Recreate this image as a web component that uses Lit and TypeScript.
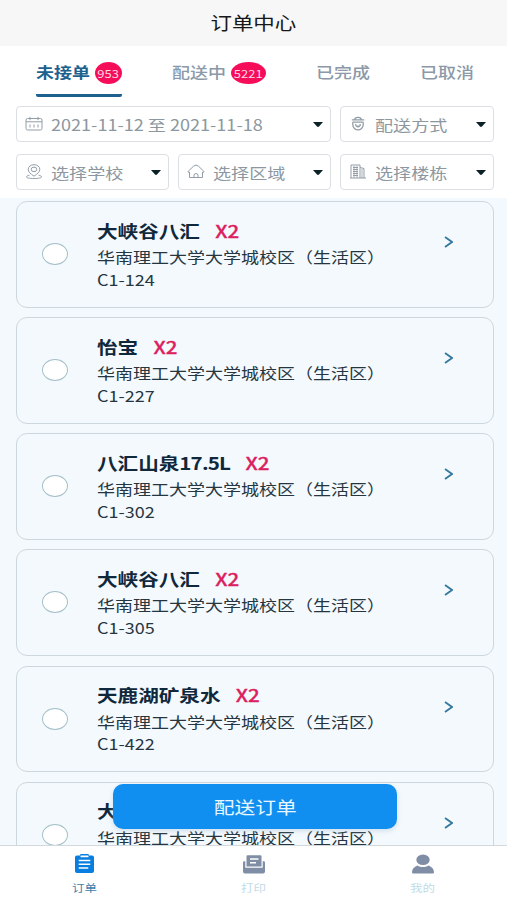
import { LitElement, html, css, svg } from 'lit';
import { customElement, property } from 'lit/decorators.js';

const filterIcons: Record<string, unknown> = {
  date: svg`<rect x="1" y="2.500" width="16" height="11.500" rx="1.500"/><path d="M1 5.800h16M5 .8v3.400M13 .8v3.400M5 8.500v3M9 8.500v3M13 8.500v3" />`,
  way: svg`<path stroke-width="1.300" d="M2.800 3.800h12.400M5.500 3.800C6 .5 12 .5 12.500 3.800M3.600 6.200h10.800M3.800 6.200v2.600c0 3 2.700 5 5.200 5s5.200-2 5.200-5V6.200M6.800 8c-.6 3.800 5 3.800 4.400 0M9 9.200v1"/>`,
  school: svg`<path d="M9 12.200C5.500 9.800 3.200 7.900 3.200 5.300 3.200 2.700 5.700.7 9 .7s5.800 2 5.800 4.600c0 2.600-2.300 4.500-5.800 6.900zM4.500 11.200c-2 .4-3 1-3 1.700 0 .9 2.500 1.600 7.500 1.600s7.500-.7 7.500-1.600c0-.7-1-1.300-3-1.700"/><ellipse cx="9" cy="5.400" rx="2.800" ry="2.300"/>`,
  area: svg`<path d="M2.500 8v5.500h13V8M2.500 8.200H1.200Q.8 7.700 1.300 7.200L6.500 2.200Q9 0 11.500 2.200l5.200 5q.5.500.1 1h-1.300M7 13.500v-3q2-2.200 4 0v3"/>`,
  building: svg`<path d="M2 14V1h9v13M11 3.500l4 1V14M1 14h16M4 3.500h5M4 5.500h5M4 7.500h5M4 9.500h5M4 11.500h5"/><path stroke-width=".8" d="M5 2v12M8 2v12M13 5v9"/>`,
};

const navIcons: Record<string, unknown> = {
  order: svg`<path fill-rule="evenodd" d="M3 1.500h3V1Q6 0 7.200 0h6.600Q15 0 15 1v.5h3q2 0 2 1.800v13.900q0 1.800-2 1.800H3q-2 0-2-1.800V3.300Q1 1.500 3 1.500zM6.500 1.600v1.700h8V1.600zM4.700 5.700v1.500h11.600V5.700zM4.700 9.500V11h11.600V9.500zM4.700 13.300v1.500h9.600v-1.500z"/>`,
  print: svg`<path fill-rule="evenodd" d="M4.500 1.300h13q1 0 1 1v10.200h-15V2.300q0-1 1-1zM7 4.300v1.500h8.500V4.300zM7 8v1.500h6V8z"/><path d="M0 8.500Q0 7.300 1.200 7.300h1.100v6.500h17.400V7.300h1.100q1.200 0 1.200 1.200v9q0 2-2 2H2q-2 0-2-2z"/>`,
  mine: svg`<ellipse cx="11" cy="5.800" rx="6.700" ry="5.300"/><path d="M0 18.500c0-3.700 2-5.800 5.400-7.100 3.500 2 7.700 2 11.200 0 3.400 1.300 5.400 3.400 5.400 7.100q0 1-1.200 1H1.200q-1.200 0-1.200-1z"/>`,
};

@customElement('filter-select')
export class FilterSelect extends LitElement {
  @property() icon = 'date';
  @property() label = '';
  static styles = css`
    :host { display: block; min-width: 0; }
    .box {
      box-sizing: border-box; height: 36px; display: flex; align-items: center;
      padding: 0 7px 0 8px; border: 1.500px solid #dadfe2; border-radius: 4px; background: #fff;
    }
    .icon { width: 18px; height: 15px; flex: none; fill: none; stroke: #929da7; stroke-width: 1; margin: 0 8px 1px 0; }
    .label { flex: 1; min-width: 0; height: 24px; line-height: 24px; color: #8c979f; font-size: 15.250px; white-space: nowrap; }
    .label span { display: inline-block; transform: scaleX(1.185); transform-origin: 0 50%; }
    .caret { width: 10px; height: 5px; flex: none; fill: #0c2027; }
  `;
  render() {
    return html`<div class="box">
      <svg class="icon" viewBox="0 0 18 15">${filterIcons[this.icon]}</svg>
      <div class="label"><span>${this.label}</span></div>
      <svg class="caret" viewBox="0 0 10 5"><path d="M0 0h10L6 4.500q-1 .8-2 0z"/></svg>
    </div>`;
  }
}

@customElement('order-card')
export class OrderCard extends LitElement {
  @property() name = '';
  @property() room = '';
  static styles = css`
    :host { display: block; }
    .card {
      box-sizing: border-box; height: 106.500px; border: 1px solid #cdd8de; border-radius: 11px;
      display: flex; background: #f4f9fe; padding: 0 40.500px 0 24.500px;
    }
    .radio { box-sizing: border-box; width: 26px; height: 22px; border: 1px solid #a5c0c9; border-radius: 50%; background: #fff; margin-top: 41px; flex: none; }
    .info { flex: 1; min-width: 0; margin-left: 29px; padding-top: 15.500px; color: #263640; white-space: nowrap; }
    .text { transform: scaleX(1.180); transform-origin: 0 0; width: 250px; font-size: 15.250px; }
    .title { font-size: 17.450px; line-height: 26px; height: 27.500px; font-weight: 700; color: #10283b; }
    .latin { letter-spacing: -.7px; }
    .count { color: #dc1f5f; margin-left: 13px; font-weight: 500; -webkit-text-stroke: .3px #dc1f5f; }
    .line { line-height: 22.500px; height: 22.500px; }
    .arrow { width: 9px; height: 12px; margin-top: 34px; flex: none; fill: none; stroke: #33789c; stroke-width: 1.800; }
  `;
  render() {
    const parts = this.name.split(/([\d.A-Z]+)/).filter(Boolean);
    return html`<div class="card">
      <div class="radio"></div>
      <div class="info"><div class="text">
        <div class="title">${parts.map(p => /^\d/.test(p) ? html`<span class="latin">${p}</span>` : p)}<span class="count">X2</span></div>
        <div class="line">华南理工大学大学城校区（生活区）</div>
        <div class="line">${this.room}</div>
      </div></div>
      <svg class="arrow" viewBox="0 0 9 12"><path d="M1 1l7 5-7 5"/></svg>
    </div>`;
  }
}

@customElement('app-root')
export class AppRoot extends LitElement {
  static styles = css`
    :host {
      display: flex; flex-direction: column; height: 900px; width: 507px; overflow: hidden; background: #fff;
      font-family: "Noto Sans CJK SC", "Noto Sans", sans-serif;
    }
    .wide { display: inline-block; transform: scaleX(1.180); white-space: nowrap; }
    .header { box-sizing: border-box; height: 46px; flex: none; display: flex; justify-content: center; align-items: center; padding-bottom: 3px; background: #f7f7f7; color: #181818; font-size: 18.200px; }
    .tabs { height: 54px; flex: none; display: flex; padding: 0 32px 0 36px; color: #8b99a8; font-size: 15.250px; font-weight: 500; }
    .tab { box-sizing: border-box; height: 51px; display: flex; align-items: center; padding-top: 2px; }
    .tab .wide { transform-origin: 0 50%; width: 54px; margin-bottom: 4px; }
    .tab + .tab { margin-left: 50px; }
    .tab.active { color: #1d628f; font-weight: 700; border-bottom: 3px solid #1d628f; padding-top: 5px; border-radius: 0 0 2px 2px; }
    .badge { height: 22px; border-radius: 50%; background: #f60d59; color: #ffd9e5; font-size: 11px; font-weight: 400; line-height: 23px; display: flex; justify-content: center; margin-left: 5px; }
    .badge span { transform: scaleX(1.180); }
    .small { width: 27px; } .large { width: 35px; }
    .filters { flex: none; display: grid; grid-template-columns: 153px 153px 154px; gap: 12px 9px; padding: 6px 13px 8px 16px; }
    .span { grid-column: span 2; }
    .list { flex: 1; min-height: 0; overflow: hidden; background: #f4f9fe; padding: 3px 13px 0 16px; display: flex; flex-direction: column; gap: 9.650px; }
    .list order-card { flex: none; }
    .nav { position: relative; box-sizing: border-box; height: 55px; flex: none; display: flex; border-top: 1px solid #d2d8dc; background: #fff; }
    .item { flex: 1; display: flex; flex-direction: column; align-items: center; padding-top: 8px; color: #c2dbe8; font-size: 10.600px; line-height: 16px; fill: #7f8ea4; }
    .item svg { width: 22px; height: 20px; margin-bottom: 6px; }
    .item.active { fill: #087ee0; color: #3584af; }
    .deliver { position: absolute; left: 113px; bottom: 16px; width: 284px; height: 45px; border: 0; border-radius: 10px; background: #108ff0; color: #e8f6ff; font-family: inherit; font-size: 17.600px; padding: 0; box-shadow: 0 2px 5px #9ab8cf66; }
    .deliver-zone { position: relative; height: 0; flex: none; }
  `;
  orders = [['大峡谷八汇', 'C1-124'], ['怡宝', 'C1-227'], ['八汇山泉17.5L', 'C1-302'], ['大峡谷八汇', 'C1-305'], ['天鹿湖矿泉水', 'C1-422'], ['大峡谷八汇', 'C1-424']];
  render() {
    return html`
      <div class="header"><span class="wide">订单中心</span></div>
      <div class="tabs">
        <div class="tab active"><span class="wide">未接单</span><div class="badge small"><span>953</span></div></div>
        <div class="tab"><span class="wide">配送中</span><div class="badge large"><span>5221</span></div></div>
        <div class="tab"><span class="wide">已完成</span></div>
        <div class="tab"><span class="wide">已取消</span></div>
      </div>
      <div class="filters">
        <filter-select class="span" icon="date" label="2021-11-12 至 2021-11-18"></filter-select>
        <filter-select icon="way" label="配送方式"></filter-select>
        <filter-select icon="school" label="选择学校"></filter-select>
        <filter-select icon="area" label="选择区域"></filter-select>
        <filter-select icon="building" label="选择楼栋"></filter-select>
      </div>
      <div class="list">${this.orders.map(([name, room]) => html`<order-card .name=${name} .room=${room}></order-card>`)}</div>
      <div class="deliver-zone"><button class="deliver"><span class="wide">配送订单</span></button></div>
      <div class="nav">
        <div class="item active"><svg viewBox="0 0 22 20">${navIcons.order}</svg><span class="wide">订单</span></div>
        <div class="item"><svg viewBox="0 0 22 20">${navIcons.print}</svg><span class="wide">打印</span></div>
        <div class="item"><svg viewBox="0 0 22 20">${navIcons.mine}</svg><span class="wide">我的</span></div>
      </div>`;
  }
}
